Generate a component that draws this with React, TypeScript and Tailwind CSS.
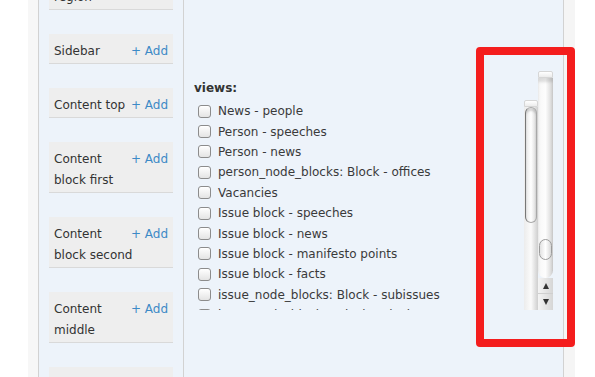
import React from "react";

const blocks = [
  "Navigation region",
  "Sidebar",
  "Content top",
  "Content block first",
  "Content block second",
  "Content middle",
  "Content bottom",
];

const views = [
  "News - people",
  "Person - speeches",
  "Person - news",
  "person_node_blocks: Block - offices",
  "Vacancies",
  "Issue block - speeches",
  "Issue block - news",
  "Issue block - manifesto points",
  "Issue block - facts",
  "issue_node_blocks: Block - subissues",
  "issue_node_blocks: Block - Blockquote",
];

function Checkbox() {
  return (
    <span className="w-[13px] h-[13px] shrink-0 rounded-[3px] border border-[#8c8c8c] bg-linear-to-b from-white to-[#e4e4e4] shadow-[inset_0_1px_0_#fff]" />
  );
}

function Scrollbars() {
  return (
    <div className="flex items-end">
      {/* inner list scrollbar */}
      <div className="w-[14px] h-[210px] flex flex-col">
        <div className="h-[7px] border border-[#d6d6d6] rounded-t-[2px] bg-linear-to-b from-white to-[#ececec]" />
        <div className="flex-1 bg-linear-to-r from-[#ececec] via-[#fbfbfb] to-[#cfcfcf] flex flex-col">
          <div className="h-[116px] mx-[1px] rounded-full border border-[#a8a8a8] border-l-[#777] bg-linear-to-r from-[#e9e9e9] via-white to-[#dcdcdc] shadow-[inset_0_3px_2px_rgba(0,0,0,0.15)]" />
        </div>
      </div>
      {/* outer page scrollbar */}
      <div className="w-[15px] h-[239px] flex flex-col">
        <div className="h-[7px] border border-[#d6d6d6] rounded-t-[2px] bg-linear-to-b from-white to-[#ececec]" />
        <div className="h-[200px] bg-linear-to-r from-[#f7f7f7] via-[#fdfdfd] to-[#d2d2d2] rounded-b-full shadow-[inset_0_4px_3px_rgba(0,0,0,0.12)] pt-[161px]">
          <div className="h-[21px] mx-[1px] rounded-full border border-[#9c9c9c] bg-linear-to-r from-[#e2e2e2] via-white to-[#d8d8d8]" />
        </div>
        <div className="h-[16px] flex items-center justify-center border-b border-[#cfcfcf] bg-linear-to-r from-[#f4f4f4] to-[#d6d6d6]">
          <span className="w-0 h-0 border-l-[3.5px] border-r-[3.5px] border-b-[6px] border-l-transparent border-r-transparent border-b-[#333]" />
        </div>
        <div className="h-[16px] flex items-center justify-center bg-linear-to-r from-[#f4f4f4] to-[#d6d6d6]">
          <span className="w-0 h-0 border-l-[3.5px] border-r-[3.5px] border-t-[6px] border-l-transparent border-r-transparent border-t-[#333]" />
        </div>
      </div>
    </div>
  );
}

export default function App() {
  return (
    <div className="relative w-[595px] h-[377px] overflow-hidden bg-white flex font-['DejaVu_Sans',Verdana,sans-serif] text-[12px] text-[#333]">
      <div className="w-[28px] shrink-0" />
      <div className="w-[11px] shrink-0 bg-[#f7f7f7] border-r border-[#d2d2d2]" />

      {/* regions column */}
      <div className="w-[145px] shrink-0 bg-[#edf3fa] border-r border-[#d2d2d2] px-[10px]">
        <div className="mt-[-41px] flex flex-col gap-[24px]">
          {blocks.map((b) => (
            <div key={b} className="bg-[#eeeeee] border-b border-[#d9d9d9] px-[5px] pt-[7px] pb-[1px] leading-[21px]">
              <span className="float-right ml-[4px] text-[#3d8ac6]">+ Add</span>
              {b}
            </div>
          ))}
        </div>
      </div>

      {/* views column */}
      <div className="w-[380px] shrink-0 bg-[#edf3fa] border-r border-[#d2d2d2] pl-[10px] pr-[10px]">
        <div className="flex h-[310px]">
          <div className="flex-1 flex flex-col pt-[78px]">
            <div className="font-bold leading-[20px] h-[22px] text-[#333]">views:</div>
            <div className="flex-1 overflow-hidden pt-[1px]">
              {views.map((v) => (
                <div key={v} className="h-[20.4px] flex items-center gap-[7px] pl-[4px] whitespace-nowrap text-[#3a3a3a]">
                  <Checkbox />
                  <span>{v}</span>
                </div>
              ))}
            </div>
          </div>
          <Scrollbars />
        </div>
      </div>

      <div className="w-[11px] shrink-0 bg-[#f5f5f5]" />

      {/* annotation */}
      <div className="absolute left-[476px] top-[47px] w-[99px] h-[300px] border-[8px] border-[#f41d1d] rounded-[4px]" />
    </div>
  );
}
